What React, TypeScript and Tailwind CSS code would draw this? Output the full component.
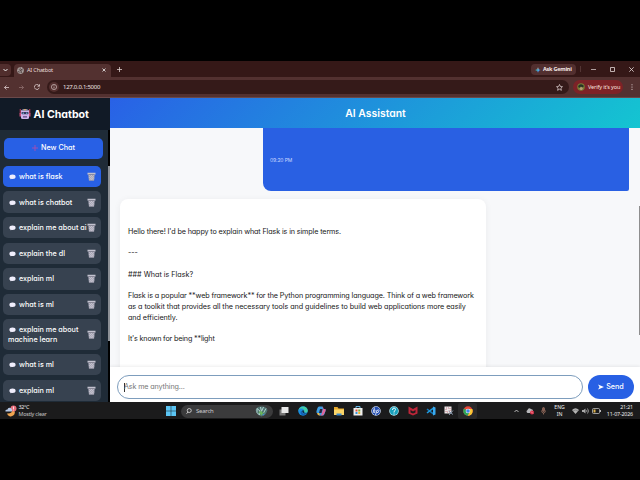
import { useState } from 'react'
import type { ReactNode } from 'react'
import clsx from 'clsx'

interface Chat {
  id: number
  title: ReactNode
  tall?: boolean
}

const chats: Chat[] = [
  { id: 1, title: 'what is flask' },
  { id: 2, title: 'what is chatbot' },
  { id: 3, title: 'explain me about ai' },
  { id: 4, title: 'explain the dl' },
  { id: 5, title: 'explain ml' },
  { id: 6, title: 'what is ml' },
  { id: 7, title: 'explain me about', tall: true },
  { id: 8, title: 'what is ml' },
  { id: 9, title: 'explain ml' },
]

function Bubble() {
  return (
    <svg className="h-[6px] w-[7px] shrink-0" viewBox="0 0 14 12">
      <ellipse cx="7" cy="5.5" rx="6.2" ry="4.5" fill="#f0eefc" />
      <path d="M3 8 3 10.500 7 9.500z" fill="#f0eefc" />
    </svg>
  )
}

function Trash() {
  return (
    <svg className="h-[9px] w-[9px] shrink-0" viewBox="0 0 18 18">
      <path d="M1 1.500h16v3.700H1z" fill="#c3c2cf" />
      <path d="M2.500 5h13l-1.400 12.500H3.900z" fill="#a3a2b1" />
      <path d="m4 6 9 10M8 6l6 7M4.5 11l5 5M14 6 5 16M10 6l-6 6M13.5 11l-5 5" stroke="#d7d5e0" strokeWidth=".9" />
      <path d="M3 5h12" stroke="#777784" strokeWidth="1" />
    </svg>
  )
}

function Robot() {
  return (
    <svg className="h-[12px] w-[12px]" viewBox="0 0 24 24">
      <path d="M2.500 2v9M21.500 2v9" stroke="#d83f5f" strokeWidth="1.800" />
      <path d="M1 10h3v7H1zM20 10h3v7h-3z" fill="#c94f78" />
      <path d="M4 5q8-5 16 0v14q0 3-3 3H7q-3 0-3-3z" fill="#cdb4ea" />
      <path d="M6 4q6-4 12 0v2H6z" fill="#8c8fae" />
      <rect x="5" y="8" width="14" height="4.500" rx="1.500" fill="#35365e" />
      <circle cx="8.500" cy="10.300" r="1.300" fill="#8dd9f7" />
      <circle cx="15.500" cy="10.300" r="1.300" fill="#8dd9f7" />
      <path d="M8 16.500h8v2.500H8z" fill="#5d477f" />
      <circle cx="12" cy="3.500" r="1.600" fill="#f3b64a" />
    </svg>
  )
}

function BrowserChrome() {
  return (
    <div className="h-[37px] shrink-0 bg-[#351817] font-['Noto_Sans',sans-serif] text-[#e8d9d8]">
      <div className="flex h-[16px] items-end">
        <div className="mb-[1px] flex h-[12px] w-[11px] items-center justify-center rounded-r-[4px] bg-[#512e2d]">
          <svg className="h-[4px] w-[5px]" viewBox="0 0 10 8" fill="none" stroke="#eee" strokeWidth="2"><path d="m1 2 4 4 4-4" /></svg>
        </div>
        <div className="ml-[3px] flex h-[13px] w-[97px] items-center rounded-t-[4px] bg-[#533130] pb-[1px] pl-[3px]">
          <svg className="h-[7px] w-[7px]" viewBox="0 0 14 14">
            <circle cx="7" cy="7" r="6.2" fill="#554544" stroke="#c9c1c0" strokeWidth="1.2" />
            <path d="M2 5c3-3 4 0 6-1s1-3 1-3M1 7c4 0 6 1 5 3s2 2 2 3M13 6c-3 0-4 1-3 3l2 1" fill="none" stroke="#d5cdcc" strokeWidth="1.5" />
          </svg>
          <span className="ml-[3px] w-[75px] text-[5.600px] leading-[8px] tracking-[-0.200px]">AI Chatbot</span>
          <svg className="h-[4px] w-[4px]" viewBox="0 0 8 8" stroke="#eee" strokeWidth="1.6"><path d="m1 1 6 6M7 1 1 7" /></svg>
        </div>
        <svg className="mb-[5px] ml-[6px] h-[5px] w-[5px]" viewBox="0 0 10 10" stroke="#e6d9d8" strokeWidth="1.5"><path d="M5 0v10M0 5h10" /></svg>
        <div className="mb-[2px] ml-auto flex h-[11px] w-[45px] items-center rounded-[4px] bg-[#522f2f] pl-[4px]">
          <svg className="h-[6px] w-[6px]" viewBox="0 0 12 12">
            <path d="M6 0Q6.5 5.5 12 6 6.5 6.5 6 12 5.5 6.5 0 6 5.5 5.500 6 0" fill="#4c9df4" />
            <path d="M6 0Q6.200 3 7 4.500H4.500Q6 3 6 0" fill="#efad54" />
            <path d="M0 6q4-.5 5-2v4Q4 6.500 0 6" fill="#41ae73" />
          </svg>
          <span className="ml-[2px] whitespace-nowrap text-[5.500px] font-bold tracking-[-0.230px] text-[#f4e9e8]">Ask Gemini</span>
        </div>
        <span className="mb-[5px] ml-[4px] h-[6px] w-px bg-[#533534]" />
        <div className="mb-[5px] ml-[10px] flex w-[49px] items-center gap-[14px]">
          <svg className="h-[5px] w-[5px]" viewBox="0 0 5 5" stroke="#e4d8d7" strokeWidth=".7"><path d="M0 2.500h5" /></svg>
          <svg className="h-[5px] w-[5px]" viewBox="0 0 5 5" fill="none" stroke="#e4d8d7" strokeWidth=".8"><path d="M.5.5h4v4h-4z" /></svg>
          <svg className="h-[5px] w-[5px]" viewBox="0 0 5 5" stroke="#e4d8d7" strokeWidth=".8"><path d="m.3.3 4.400 4.400m0-4.400L.3 4.700" /></svg>
        </div>
      </div>
      <div className="flex h-[21px] items-center border-b border-[#6a494a] bg-[#533130] pl-[4px]">
        <svg className="h-[5px] w-[5px]" viewBox="0 0 10 10" fill="none" stroke="#e5d6d5" strokeWidth="1.5"><path d="M10 5H1m4-4L1 5l4 4" /></svg>
        <svg className="ml-[10px] h-[5px] w-[5px]" viewBox="0 0 10 10" fill="none" stroke="#937473" strokeWidth="1.5"><path d="M0 5h9M5 1l4 4-4 4" /></svg>
        <svg className="ml-[10px] h-[6px] w-[6px]" viewBox="0 0 12 12" fill="none" stroke="#e5d6d5" strokeWidth="1.5"><path d="M10.500 7.500A5 5 0 1 1 9.500 2.600L11 4.200M11 .5v4H7" /></svg>
        <div className="ml-[7px] flex h-[14px] w-[522px] items-center rounded-full bg-[#351a19] pl-[2px] pr-[6px]">
          <div className="flex h-[10px] w-[10px] items-center justify-center rounded-full bg-[#532f2e]">
            <svg className="h-[6px] w-[6px]" viewBox="0 0 12 12" fill="none" stroke="#e5d6d5" strokeWidth="1.2"><circle cx="6" cy="6" r="5.2" /><path d="M6 5v4M6 2.700v1.200" /></svg>
          </div>
          <span className="ml-[4px] text-[6px] tracking-[-0.260px] text-[#eee3e2]">127.0.0.1:5000</span>
          <svg className="ml-auto h-[7px] w-[7px]" viewBox="0 0 14 14" fill="none" stroke="#eadddd" strokeWidth="1.4"><path d="m7 1 1.800 4 4.200.4-3.200 2.900 1 4.300L7 10.400l-3.800 2.200 1-4.300L1 5.400 5.200 5z" /></svg>
        </div>
        <div className="ml-[4px] flex h-[14px] w-[50px] items-center rounded-full bg-[#7d2227] pl-[4px]">
          <svg className="h-[8px] w-[8px]" viewBox="0 0 16 16">
            <circle cx="8" cy="8" r="7.500" fill="#777b35" />
            <path d="M2 6q6-7 12 0l-3 3-3-2-4 3z" fill="#273327" />
            <path d="m5 11 3-3 4 2-2 4H7z" fill="#b89b77" />
          </svg>
          <span className="ml-[3px] whitespace-nowrap text-[5.500px] tracking-[-0.120px] text-[#fae0df]">Verify it’s you</span>
        </div>
        <svg className="ml-[8px] h-[6px] w-[2px]" viewBox="0 0 4 12" fill="#eadedd"><circle cx="2" cy="1.500" r="1.200" /><circle cx="2" cy="6" r="1.200" /><circle cx="2" cy="10.500" r="1.200" /></svg>
      </div>
    </div>
  )
}

function Sidebar() {
  const [active, setActive] = useState(1)

  return (
    <aside className="flex w-[110px] shrink-0 flex-col bg-[#1f2b37] text-white">
      <div className="flex h-[32px] shrink-0 items-center gap-[3px] bg-[#111a26] pl-[18.500px] text-[10.600px] font-bold">
        <Robot />
        <span className="pt-px">AI Chatbot</span>
      </div>
      <div className="flex min-h-0 flex-1">
        <div className="min-w-0 flex-1 overflow-hidden px-[3px] pt-[7.500px]">
          <button className="ml-[1px] flex h-[21px] w-[99px] items-center justify-center gap-[3px] rounded-[5px] bg-[#2860e5] text-[7.200px] font-medium">
            <svg className="h-[6px] w-[6px]" viewBox="0 0 12 12" stroke="#a64fb0" strokeWidth="1.800"><path d="M6 0v12M0 6h12" /></svg>
            <span className="pt-px">New Chat</span>
          </button>
          <div className="mt-[7.300px] flex flex-col gap-[4.200px]">
            {chats.map(c => (
              <div
                key={c.id}
                onClick={() => setActive(c.id)}
                className={clsx(
                  'flex w-[98px] shrink-0 items-center rounded-[5px] pl-[5px] pr-[5px] text-[7.2px] font-medium leading-[10px]',
                  c.tall ? 'h-[30.600px]' : 'h-[21.400px]',
                  c.id === active ? 'bg-[#2860e5]' : 'bg-[#374250]',
                )}>
                <div className="min-w-0 flex-1 whitespace-nowrap pt-px">
                  <div className="flex items-center gap-[3px] pl-[1px]">
                    <Bubble />
                    <span>{c.title}</span>
                  </div>
                  {c.tall && <div>machine learn</div>}
                </div>
                <Trash />
              </div>
            ))}
          </div>
        </div>
        <div className="w-[2px] bg-black pt-[36px]">
          <div className="h-[175px] bg-[#8c9096]" />
        </div>
      </div>
    </aside>
  )
}

function ChatPanel() {
  return (
    <main className="flex min-w-0 flex-1 flex-col bg-[#f7f8fa]">
      <header className="flex h-[30px] shrink-0 items-center justify-center bg-[linear-gradient(135deg,#2961e6,#14c5d1)] text-[10.400px] font-semibold text-white">
        <span className="pl-[1px] pt-px">AI Assistant</span>
      </header>
      <div className="flex min-h-0 flex-1">
        <div className="flex min-w-0 flex-1 flex-col overflow-hidden pl-[10px] pr-[10px]">
          <div className="h-[62.500px] w-[366px] shrink-0 self-end rounded-bl-[8px] rounded-br-[2px] bg-[#2960e3] pl-[7px] pt-[28.500px] text-[5px] leading-[7px] tracking-[-0.100px] text-[#c9d8ff]">
            09:20 PM
          </div>
          <div className="mt-[8px] h-[200px] w-[366px] shrink-0 whitespace-nowrap rounded-[8px] bg-white pl-[8px] pt-[28.500px] text-[7.200px] leading-[10.720px] text-[#171717] shadow-[0_1px_7px_rgba(0,0,0,0.06)]">
            <p className="tracking-[-0.117px]">Hello there! I'd be happy to explain what Flask is in simple terms.</p>
            <p className="mt-[10.720px]">---</p>
            <p className="mt-[10.720px]">### What is Flask?</p>
            <p className="mt-[10.720px] tracking-[-0.099px]">Flask is a popular **web framework** for the Python programming language. Think of a web framework</p>
            <p className="tracking-[-0.052px]">as a toolkit that provides all the necessary tools and guidelines to build web applications more easily</p>
            <p className="tracking-[-0.050px]">and efficiently.</p>
            <p className="mt-[10.720px] tracking-[-0.160px]">It's known for being **light</p>
          </div>
        </div>
        <div className="w-[1px] pt-[78px]">
          <div className="h-[129px] bg-[#8e8e8e]" />
        </div>
      </div>
      <div className="z-10 flex h-[35px] shrink-0 items-start gap-[5px] bg-white pl-[7px] pt-[8px] shadow-[0_-1px_3px_rgba(0,0,0,0.07)]">
        <div className="flex h-[24px] w-[466px] items-center rounded-full border border-[#7d9dbd] pl-[6px] text-[7.200px] text-[#777]">
          <span className="h-[9px] w-px bg-[#333]" />
          <span className="-ml-px pt-px tracking-[-0.140px]">Ask me anything...</span>
        </div>
        <button className="flex h-[24px] w-[46px] items-center justify-center gap-[2px] rounded-full bg-[#2860e4] text-[7.200px] font-medium text-white">
          <svg className="h-[6px] w-[6px]" viewBox="0 0 12 12" fill="white"><path d="m0 1 12 5-12 5 3-5z" /></svg>
          <span className="pt-px">Send</span>
        </button>
      </div>
    </main>
  )
}

const apps: { name: string; art: ReactNode }[] = [
  { name: 'taskview', art: <><path d="M1 7h12v12H1z" fill="#777" /><path d="M5 2h14v12H5z" fill="#e7e7e7" /></> },
  { name: 'edge', art: <><circle cx="10" cy="10" r="9.500" fill="#178bd3" /><path d="M1 9C2-2 19-2 19.500 9c0 5-6 5-7 3 1-3-1-5-4-5S2 8 1 9" fill="#43cda8" /><path d="M1 9c2-5 9-5 11-1-4-2-7 4 0 7-2 4-10 3-11-6" fill="#1c8fe0" /><path d="M8 10c-1 5 4 8 10 5-5 6-13 4-13-2 0-2 1-3 3-3" fill="#1460b8" /><path d="M9 9c2-1 4 1 3 3 1 3 5 3 7 1l-2 2C11 16 7 12 9 9" fill="#122c43" /></> },
  { name: 'copilot', art: <><path d="M6 1h7l2 5h3q2 0 1 4l-2 6q-1 3-4 3H7l-2-5H2q-2 0-1-4l2-6q1-3 3-3" fill="#3d9ee3" /><path d="M12 1q3 0 3 5h3q2 0 1 4l-3 6q-1 3-4 3H8q3-1 4-5l2-8q0-3-2-5" fill="#e0669c" /><path d="m2 14 4 0 2 5H7q-4 0-5-5" fill="#efb847" /><path d="M8 6h5l-2 8H6z" fill="#24253c" /></> },
  { name: 'explorer', art: <><path d="M0 2h7l2 3h11v13H0z" fill="#e8a92c" /><path d="M0 7h20v11H0z" fill="#fbd568" /><path d="M5 15h10v4H5z" fill="#3c8ace" /></> },
  { name: 'store', art: <><path d="M6 5V1h8v4" fill="none" stroke="#65b8e6" strokeWidth="2" /><path d="M1 4h18v15H1z" fill="#eee" /><path d="M5 7h4v4H5z" fill="#e44d35" /><path d="M10.500 7h4v4h-4z" fill="#74af36" /><path d="M5 12h4v4H5z" fill="#3796d6" /><path d="M10.500 12h4v4h-4z" fill="#edb02d" /></> },
  { name: 'hp', art: <><circle cx="10" cy="10" r="9.500" fill="#e7f1ff" /><circle cx="10" cy="10" r="8.500" fill="#244eb1" /><path d="M7 3 4 14m1-5q4-3 3 0l-1 5M12 8 9 18m3-9q4-3 4 0-1 6-5 4" fill="none" stroke="#fff" strokeWidth="1.500" /></> },
  { name: 'help', art: <><circle cx="10" cy="10" r="9.500" fill="#b9eef5" /><circle cx="10" cy="10" r="8" fill="#18a1bd" /><path d="M7 8q0-4 3-4t3 3q0 2-3 4v2m0 2v2" fill="none" stroke="white" strokeWidth="2" /></> },
  { name: 'mcafee', art: <path d="m1 1 9 5 9-5v14l-9 4-9-4zm4 7v5l5 2 5-2V8l-5 3z" fill="#bd2639" fillRule="evenodd" /> },
  { name: 'vscode', art: <><path d="m1 7 2-2 12 9v4z" fill="#1679b9" /><path d="m1 13 2 2 12-9V2z" fill="#209be0" /><path d="m14 1 5 2v14l-5 2z" fill="#39aaf0" /></> },
  { name: 'snip', art: <><path d="M1 1h14v14H1z" fill="#ece6e7" /><path d="M4 4h8v8H4z" fill="none" stroke="#b15c65" strokeWidth="1.500" strokeDasharray="2 2" /><path d="m9 10 9 7m0-8-8 9" stroke="#8494a8" strokeWidth="2" /></> },
  { name: 'chrome', art: <><circle cx="10" cy="10" r="9.500" fill="#e94738" /><path d="M10 10 1.800 5.200A9.500 9.500 0 0 0 9.500 19.500l4-7.500z" fill="#2ca65a" /><path d="M11 6h7.500A9.500 9.500 0 0 1 9.500 19.500l4-7.500z" fill="#f8c632" /><circle cx="10" cy="10" r="4.600" fill="#f4f6fa" /><circle cx="10" cy="10" r="3.600" fill="#4385e9" /></> },
]

function Taskbar() {
  return (
    <div className="flex h-[17px] shrink-0 items-center bg-[#1b1b1c] pt-px font-['Noto_Sans',sans-serif] text-[#eee]">
      <svg className="ml-[5px] h-[12px] w-[12px] shrink-0" viewBox="0 0 24 24">
        <path d="M9 8a8 8 0 1 0 12 9Q11 18 9 8" transform="matrix(-1 0 0 1 25 0)" fill="#efa450" />
        <circle cx="17" cy="7" r="6" fill="#e86d7b" />
        <path d="M1 13q-1-4 4-4 1-5 6-3 4 1 3 7z" fill="#b7cae8" />
        <path d="M17 3v5m0 1v2" stroke="#fff" strokeWidth="1.500" />
      </svg>
      <div className="ml-[1.500px] w-[146px] text-[5.400px] leading-[7px]">
        <p className="tracking-[-0.300px]">32°C</p>
        <p className="text-[#c5c5c5] tracking-[-0.200px]">Mostly clear</p>
      </div>
      <svg className="ml-[1px] h-[10px] w-[10px] shrink-0" viewBox="0 0 20 20" fill="#5bc5f4"><path d="M0 0h9.500v9.500H0zM10.500 0H20v9.500h-9.500zM0 10.500h9.500V20H0zM10.500 10.500H20V20h-9.500z" /></svg>
      <div className="ml-[5.500px] flex h-[13px] w-[92px] shrink-0 items-center rounded-full bg-[#3b3b3c] pl-[5px] pr-[5px]">
        <svg className="h-[6px] w-[6px]" viewBox="0 0 12 12" fill="none" stroke="#eee" strokeWidth="1.500"><circle cx="6.500" cy="5" r="4" /><path d="m4 8-3 3.500" /></svg>
        <span className="ml-[4px] text-[6px] tracking-[-0.250px] text-[#ccc]">Search</span>
        <svg className="ml-auto h-[11px] w-[13px]" viewBox="0 0 26 22">
          <path d="M1 8q3-8 12-7 9-1 12 7-2 10-12 13Q3 18 1 8" fill="#4f7472" />
          <path d="M4 5v8l5 5 1-8zM11 2l2 9 4-9M22 5l-5 9" fill="none" stroke="#b4d3ce" strokeWidth="2" />
          <path d="m7 12 6 7 7-8-5 3-2-4z" fill="#68b35b" />
          <path d="m14 17 6-2-3 4z" fill="#448fd8" />
        </svg>
      </div>
      <div className="ml-[2px] flex shrink-0">
        {apps.map(a => (
          <span key={a.name} className={clsx('flex h-[16px] w-[18.350px] items-center justify-center rounded-[2px]', a.name === 'chrome' && 'bg-[#29292a]')}>
            <svg className="h-[10px] w-[10px]" viewBox="0 0 20 20">{a.art}</svg>
          </span>
        ))}
      </div>
      <div className="ml-auto flex items-center pr-[7px]">
        <svg className="mr-[7px] h-[4px] w-[5px]" viewBox="0 0 10 8" fill="none" stroke="#eee" strokeWidth="1.500"><path d="m1 6 4-4 4 4" /></svg>
        <svg className="mr-[7px] h-[8px] w-[8px]" viewBox="0 0 16 16"><path d="M3 12q-4-3 0-6 2-6 7-2 6 1 4 8z" fill="#b8b8bb" /><circle cx="12" cy="11" r="4" fill="#db3048" /><path d="m10 9 4 4" stroke="#fff" /></svg>
        <svg className="mr-[8px] h-[8px] w-[5px]" viewBox="0 0 10 16" fill="none" stroke="#9b7062" strokeWidth="1.500"><rect x="3" y="1" width="4" height="8" rx="2" fill="#875e52" /><path d="M1 7q0 5 4 5t4-5M5 12v3" /></svg>
        <div className="mr-[7px] w-[11px] text-center text-[5.200px] leading-[7px] tracking-[-0.1px]"><p>ENG</p><p>IN</p></div>
        <svg className="mr-[3px] h-[6px] w-[7px]" viewBox="0 0 14 12"><path d="M0 4q7-7 14 0l-7 8z" fill="#b3b3b3" /><path d="M2 6q5-4 10 0" fill="none" stroke="#676767" /></svg>
        <svg className="mr-[3px] h-[6px] w-[7px]" viewBox="0 0 14 12"><path d="M0 4h3l4-3v10L3 8H0z" fill="#aaa" /><path d="M9 4q2 2 0 4m2-7q4 5 0 10" fill="none" stroke="#ccc" strokeWidth="1.300" /></svg>
        <svg className="mr-[5px] h-[6px] w-[9px]" viewBox="0 0 18 12"><rect x="1" y="1" width="14" height="10" rx="2" fill="none" stroke="#c8c8c8" strokeWidth="1.500" /><path d="M3 3h4v6H3z" fill="#e0b44c" /><path d="M17 4v4" stroke="#bbb" strokeWidth="2" /></svg>
        <div className="w-[27px] whitespace-nowrap text-right text-[5.300px] leading-[7px] tracking-[-0.150px]"><p>21:21</p><p>11-07-2026</p></div>
      </div>
    </div>
  )
}

export default function App() {
  return (
    <div className="flex h-[480px] w-[640px] flex-col overflow-hidden bg-black pt-[61px] font-['Inter',sans-serif] [font-feature-settings:'cv11']">
      <BrowserChrome />
      <div className="flex h-[304px] shrink-0 overflow-hidden">
        <Sidebar />
        <ChatPanel />
      </div>
      <Taskbar />
    </div>
  )
}
